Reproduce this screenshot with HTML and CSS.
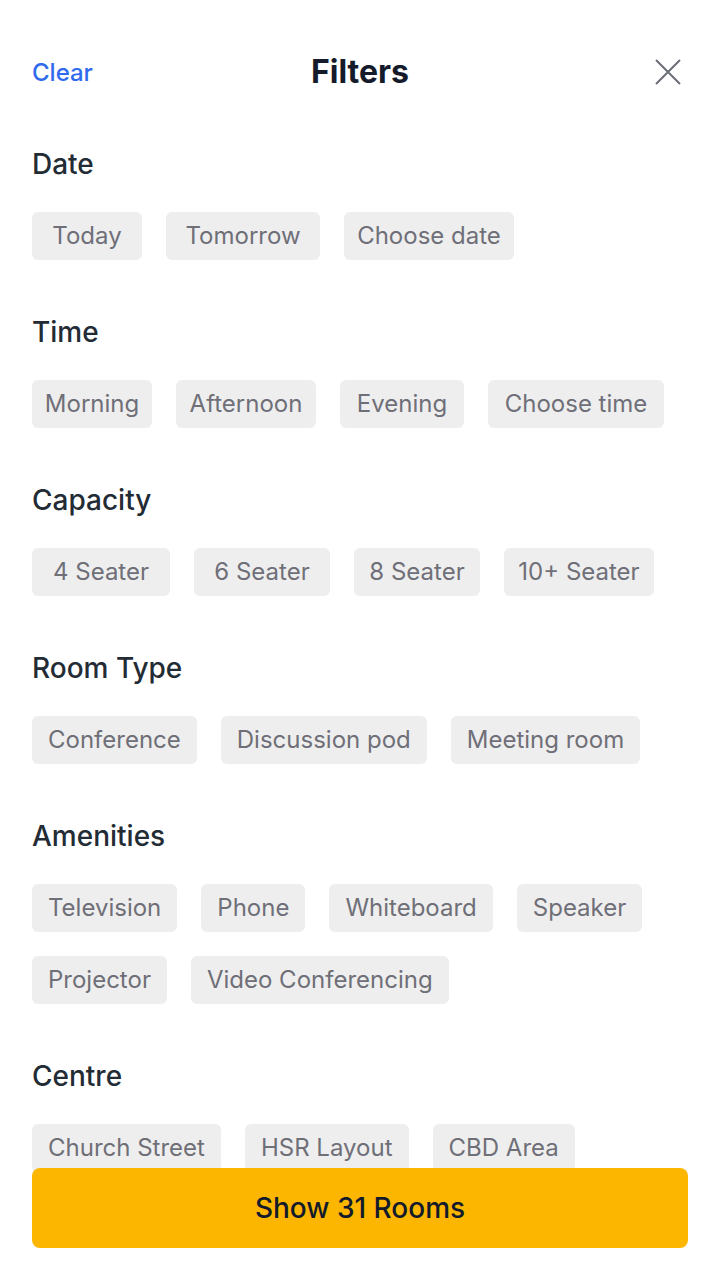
FILE: index.html
```html
<!DOCTYPE html>
<html>
<head>
<meta charset="utf-8">
<link rel="stylesheet" href="styles.css">
</head>
<body>
<div class="sheet">
  <header class="header">
    <span class="clear">Clear</span>
    <h1 class="title">Filters</h1>
    <span class="close"><svg width="28" height="28" viewBox="0 0 28 28"><path d="M2 2 L26 26 M26 2 L2 26" stroke="#6b6e76" stroke-width="2" fill="none"/></svg></span>
  </header>

  <section class="section">
    <h2 class="label">Date</h2>
    <div class="chips">
      <span class="chip w110">Today</span><span class="chip w154">Tomorrow</span><span class="chip w170">Choose date</span>
    </div>
  </section>

  <section class="section">
    <h2 class="label">Time</h2>
    <div class="chips">
      <span class="chip w120">Morning</span><span class="chip w140">Afternoon</span><span class="chip w124">Evening</span><span class="chip w176">Choose time</span>
    </div>
  </section>

  <section class="section">
    <h2 class="label">Capacity</h2>
    <div class="chips">
      <span class="chip w138">4 Seater</span><span class="chip w136">6 Seater</span><span class="chip w126">8 Seater</span><span class="chip w150">10+ Seater</span>
    </div>
  </section>

  <section class="section">
    <h2 class="label">Room Type</h2>
    <div class="chips">
      <span class="chip">Conference</span><span class="chip">Discussion pod</span><span class="chip">Meeting room</span>
    </div>
  </section>

  <section class="section">
    <h2 class="label">Amenities</h2>
    <div class="chips">
      <span class="chip">Television</span><span class="chip">Phone</span><span class="chip">Whiteboard</span><span class="chip">Speaker</span><span class="chip">Projector</span><span class="chip">Video Conferencing</span>
    </div>
  </section>

  <section class="section">
    <h2 class="label">Centre</h2>
    <div class="chips">
      <span class="chip">Church Street</span><span class="chip">HSR Layout</span><span class="chip">CBD Area</span>
    </div>
  </section>
</div>
<button class="cta">Show 31 Rooms</button>
</body>
</html>
```
FILE: styles.css
```css
html, body {
  margin: 0;
  padding: 0;
  background: #ffffff;
  font-family: Inter, "Noto Sans", sans-serif;
}
.sheet {
  padding: 48px 32px 120px;
}
.header {
  display: flex;
  align-items: center;
  justify-content: space-between;
  height: 48px;
  position: relative;
}
.clear {
  color: #2f6bec;
  font-size: 24px;
  font-weight: 500;
}
.title {
  margin: 0;
  font-size: 32px;
  font-weight: 700;
  color: #151b2b;
  position: absolute;
  left: 0;
  right: 0;
  text-align: center;
  line-height: 48px;
  pointer-events: none;
}
.close {
  display: flex;
  margin-right: 6px;
}
.section {
  padding-top: 50px;
}
.section + .section {
  padding-top: 54px;
}
.label {
  margin: 0;
  font-size: 28px;
  font-weight: 500;
  line-height: 36px;
  color: #232b35;
}
.chips {
  margin-top: 30px;
  display: flex;
  flex-wrap: wrap;
  gap: 24px;
}
.chip {
  box-sizing: border-box;
  height: 48px;
  line-height: 48px;
  padding: 0 16px;
  background: #eeeeee;
  border-radius: 6px;
  font-size: 24px;
  color: #6f6f78;
  text-align: center;
  white-space: nowrap;
}
.w110 { width: 110px; padding: 0; }
.w120 { width: 120px; padding: 0; }
.w124 { width: 124px; padding: 0; }
.w126 { width: 126px; padding: 0; }
.w136 { width: 136px; padding: 0; }
.w138 { width: 138px; padding: 0; }
.w140 { width: 140px; padding: 0; }
.w150 { width: 150px; padding: 0; }
.w154 { width: 154px; padding: 0; }
.w170 { width: 170px; padding: 0; }
.w176 { width: 176px; padding: 0; }
.cta {
  position: fixed;
  left: 32px;
  right: 32px;
  bottom: 32px;
  height: 80px;
  border: none;
  border-radius: 8px;
  background: #fdb600;
  color: #131b2b;
  font-family: Inter, "Noto Sans", sans-serif;
  font-size: 28px;
  font-weight: 500;
}
```
